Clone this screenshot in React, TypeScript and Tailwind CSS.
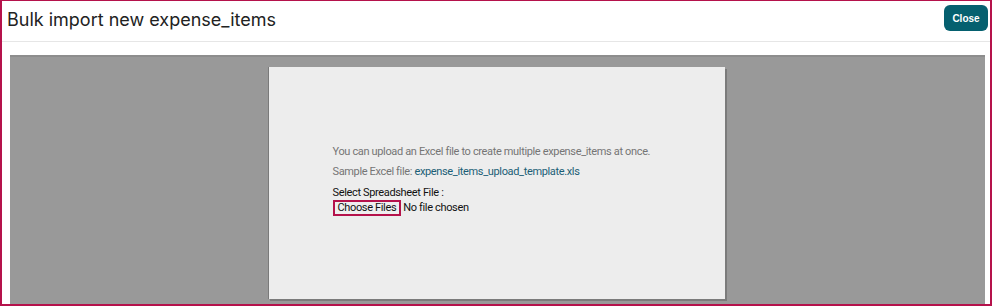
import React from "react";

export default function App() {
  return (
    <div className="w-[992px] h-[306px] bg-white border-x-2 border-t border-b-2 border-[#b5124b] flex flex-col overflow-hidden">
      <div className="h-[41px] flex items-start justify-between border-b border-[#e6e6e6] shrink-0">
        <h1 className="pl-[5px] pt-[7px] text-[18px] leading-[24px] text-[#222] font-['Inter',sans-serif]">
          Bulk import new expense_items
        </h1>
        <button className="mt-[4px] mr-[2px] w-[44px] h-[26px] rounded-[6px] bg-[#05606f] text-white text-[10px] font-bold font-['Liberation_Sans',sans-serif]">
          Close
        </button>
      </div>
      <div className="flex-1 pl-[8px] pr-[5px] pt-[13px] flex">
        <div className="flex-1 bg-[#999999] border-t-2 border-[#8d8d8d] flex justify-center pt-[10px] pr-[3px]">
          <div className="w-[457px] h-[232px] bg-[#ededed] border-l border-[#7a7a7a] shadow-[2px_2px_0_#7b7b7b] pl-[64px] pt-[78px] font-['Roboto',sans-serif] text-[11px] tracking-[-0.35px]">
            <p className="text-[#757575] leading-[14px]">
              You can upload an Excel file to create multiple expense_items at once.
            </p>
            <p className="mt-[6px] text-[#757575] leading-[14px]">
              Sample Excel file: <span className="text-[#1b5e76]">expense_items_upload_template.xls</span>
            </p>
            <p className="mt-[7px] text-[#111] leading-[14px]">Select Spreadsheet File :</p>
            <div className="flex items-center">
              <span className="border-2 border-[#b5124b] bg-[#efefef] px-[3px] leading-[12px] h-[16px] flex items-center text-[#111]">
                Choose Files
              </span>
              <span className="ml-[2px] text-[#111]">No file chosen</span>
            </div>
          </div>
        </div>
      </div>
    </div>
  );
}
